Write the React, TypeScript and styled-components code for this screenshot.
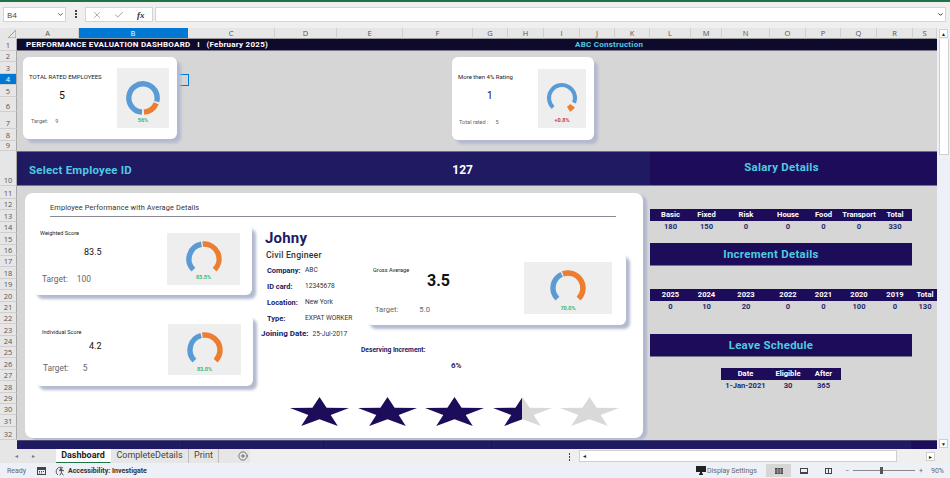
import React from "react";
import styled, { createGlobalStyle } from "styled-components";
import { Check, CirclePlus, ChevronDown, X } from "lucide-react";

const NAVY = "#1d0c5a";
const BAND = "#201a63";
const CYAN = "#4ecbe0";
const BLUE = "#5b9bd5";
const ORANGE = "#ed7d31";
const SHADOW = "#b3bad0";
const FONT = `"Roboto", "Liberation Sans", sans-serif`;

const GlobalStyle = createGlobalStyle`
  html, body {
    margin: 0;
    padding: 0;
    width: 950px;
    height: 478px;
    overflow: hidden;
    background: #efefef;
    font-family: ${FONT};
  }
  * { box-sizing: border-box; }
`;

const Window = styled.div`
  width: 950px;
  height: 478px;
  display: flex;
  flex-direction: column;
  border-top: 2px solid #217346;
  overflow: hidden;
`;

/* formula bar */
const FormulaBar = styled.div`
  height: 26px;
  flex: none;
  background: #efefef;
  display: flex;
  align-items: flex-start;
  padding: 5px 4px 0 3px;
`;

const NameBox = styled.div`
  width: 63px;
  height: 15px;
  background: #fff;
  border: 1px solid #d4d4d4;
  display: flex;
  align-items: center;
  justify-content: space-between;
  padding: 0 1px 0 3px;
  font: 8px "Open Sans", sans-serif;
  color: #444;
`;

const Kebab = styled.div`
  width: 1.5px;
  height: 1.5px;
  margin: 6px 8px 0 9px;
  background: #444;
  box-shadow: 0 -3px 0 #444, 0 3px 0 #444;
`;

const FormulaTools = styled.div`
  width: 68px;
  height: 15px;
  background: #fff;
  border: 1px solid #d4d4d4;
  display: flex;
  align-items: center;
  justify-content: space-between;
  padding: 0 7px 0 6px;
  color: #666;
`;

const Fx = styled.span`
  font: italic 700 9px "Liberation Serif", serif;
  color: #333;
`;

const FormulaInput = styled.div`
  flex: 1;
  height: 15px;
  margin-left: 2px;
  background: #fff;
  border: 1px solid #d4d4d4;
  display: flex;
  align-items: center;
  justify-content: flex-end;
  padding-right: 1px;
  color: #222;
`;

/* column headers */
const ColumnHeaders = styled.div`
  height: 11px;
  flex: none;
  display: flex;
  background: #efefef;
`;

const Corner = styled.div`
  width: 17px;
  background: #e6e6e6;
  display: flex;
  align-items: flex-end;
  justify-content: flex-end;
  padding: 0 1px 1px 0;
`;

const ColumnCell = styled.div<{ $w: number; $active?: boolean }>`
  width: ${(p) => p.$w}px;
  background: ${(p) => (p.$active ? "#0078d4" : "#e6e6e6")};
  color: ${(p) => (p.$active ? "#fff" : "#555")};
  border-right: 1px solid ${(p) => (p.$active ? "#0078d4" : "#cfcfcf")};
  border-bottom: 1px solid #9a9a9a;
  font: 7.5px/10px "Open Sans", sans-serif;
  text-align: center;
`;

const ScrollCap = styled.div`
  flex: 1;
  background: #eef0f7;
  padding: 1px 1px 0 2px;
`;

/* sheet */
const SheetRow = styled.div`
  height: 410px;
  flex: none;
  display: flex;
`;

const RowHeaders = styled.div`
  width: 17px;
  flex: none;
  background: #e6e6e6;
  display: flex;
  flex-direction: column;
`;

const RowCell = styled.div<{ $h: number; $active?: boolean }>`
  height: ${(p) => p.$h}px;
  flex: none;
  background: ${(p) => (p.$active ? "#0078d4" : "#e6e6e6")};
  color: ${(p) => (p.$active ? "#fff" : "#555")};
  border-bottom: 1px solid #cfcfcf;
  border-right: 1px solid #a8a8a8;
  display: flex;
  align-items: flex-end;
  justify-content: center;
  font: 7.5px/10px "Open Sans", sans-serif;
`;

const Sheet = styled.div`
  width: 920px;
  flex: none;
  display: flex;
  flex-direction: column;
  background: #d6d6d6;
`;

const TitleBar = styled.div`
  height: 12px;
  flex: none;
  background: #0d0a2c;
  border-bottom: 1px solid #77758c;
  display: flex;
  align-items: center;
  font-size: 8px;
  font-weight: 700;
  letter-spacing: 0.25px;
  white-space: pre;
  padding-left: 9px;
`;

const TitleText = styled.span`
  width: 549px;
  color: #fff;
`;

const TitleCompany = styled.span`
  color: ${CYAN};
`;

const TopCanvas = styled.div`
  height: 100px;
  flex: none;
  position: relative;
  display: flex;
  padding: 6px 0 0 6px;
`;

const SelectedCell = styled.div`
  position: absolute;
  left: 62px;
  top: 23px;
  width: 110px;
  height: 12px;
  border: 1.5px solid #0078d4;
`;

const SelectBand = styled.div`
  height: 35px;
  flex: none;
  display: grid;
  grid-template-columns: 633px 287px;
  border-top: 1px solid #6d6a8a;
  border-bottom: 1px solid #77758c;
`;

const SelectLeft = styled.div`
  background: ${BAND};
  position: relative;
  display: flex;
  align-items: center;
  justify-content: space-between;
  padding: 3px 177px 0 12px;
`;

const SelectLabel = styled.span`
  color: ${CYAN};
  font-size: 11.4px;
  font-weight: 700;
  letter-spacing: 0.25px;
`;

const SelectValue = styled.span`
  color: #fff;
  font-size: 12px;
  font-weight: 700;
`;

const SelectRight = styled.div`
  background: ${NAVY};
  color: ${CYAN};
  font-size: 11.4px;
  font-weight: 700;
  letter-spacing: 0.3px;
  display: flex;
  justify-content: center;
  padding: 8px 24px 0 0;
`;

const Main = styled.div`
  height: 254px;
  flex: none;
  display: grid;
  grid-template-columns: 633px 287px;
`;

const BottomBand = styled.div`
  height: 9px;
  flex: none;
  display: flex;
  background: ${BAND};
  border-top: 1px solid #4d4a78;
`;

const BottomSegment = styled.div<{ $w: number; $dark?: boolean }>`
  width: ${(p) => p.$w}px;
  background: ${(p) => (p.$dark ? NAVY : BAND)};
  border-right: 1px solid ${(p) => (p.$dark ? NAVY : "#191450")};
`;

/* floating cards */
const Card = styled.div<{ $w: number; $h: number; $left?: number; $top?: number }>`
  width: ${(p) => p.$w}px;
  height: ${(p) => p.$h}px;
  margin-left: ${(p) => p.$left ?? 0}px;
  margin-top: ${(p) => p.$top ?? 0}px;
  flex: none;
  position: relative;
  display: flex;
  justify-content: space-between;
  background: #fff;
  border-radius: 6px;
  box-shadow: 4px 4px 3px ${SHADOW};
`;

const CardText = styled.div<{ $x: number; $y: number }>`
  display: flex;
  flex-direction: column;
  padding: ${(p) => p.$y}px 0 0 ${(p) => p.$x}px;
`;

const CardTitle = styled.div<{ $size: number }>`
  font-size: ${(p) => p.$size}px;
  line-height: 8px;
  font-weight: 400;
  color: #222;
  white-space: nowrap;
`;

const CardValue = styled.div<{ $x: number; $y: number; $size: number; $bold?: boolean }>`
  margin: ${(p) => p.$y}px 0 0 ${(p) => p.$x}px;
  font-size: ${(p) => p.$size}px;
  line-height: 12px;
  font-weight: ${(p) => (p.$bold ? 700 : 400)};
  color: #111;
`;

const CardFoot = styled.div<{ $x: number; $y: number; $size: number; $gap: number }>`
  margin: ${(p) => p.$y}px 0 0 ${(p) => p.$x}px;
  display: flex;
  gap: ${(p) => p.$gap}px;
  font-size: ${(p) => p.$size}px;
  line-height: 8px;
  color: #666;
  white-space: nowrap;
`;

const Thumb = styled.div<{ $w: number; $h: number; $x: number; $y: number; $pad: number }>`
  width: ${(p) => p.$w}px;
  height: ${(p) => p.$h}px;
  margin: ${(p) => p.$y}px ${(p) => p.$x}px 0 0;
  padding-top: ${(p) => p.$pad}px;
  flex: none;
  background: #eeeeee;
  display: flex;
  flex-direction: column;
  align-items: center;
`;

const Percent = styled.div<{ $gap: number; $red?: boolean }>`
  margin-top: ${(p) => p.$gap}px;
  font-size: 5.5px;
  line-height: 6px;
  font-weight: 700;
  color: ${(p) => (p.$red ? "#c73b4b" : "#37b878")};
`;

/* big card */
const BigCard = styled.div`
  width: 618px;
  height: 245px;
  margin: 7px 0 0 8px;
  background: #fff;
  border-radius: 8px;
  box-shadow: 4px 2px 2px ${SHADOW};
  display: flex;
  flex-direction: column;
`;

const BigHeading = styled.div`
  margin: 11px 27px 0 25px;
  height: 13px;
  border-bottom: 1px solid #8a8a94;
  font-size: 7.4px;
  line-height: 8px;
  font-weight: 400;
  color: #333;
  letter-spacing: 0.1px;
`;

const BigBody = styled.div`
  display: grid;
  grid-template-columns: 228px 108px 1fr;
  margin-top: 8px;
  height: 161px;
`;

const ScoreColumn = styled.div`
  padding-left: 8px;
  display: flex;
  flex-direction: column;
  gap: 20px;
`;

const Profile = styled.div`
  display: flex;
  flex-direction: column;
  padding: 5px 0 0 8px;
`;

const Name = styled.div`
  font-size: 15px;
  line-height: 17px;
  font-weight: 700;
  color: ${BAND};
  letter-spacing: 0.2px;
  margin-left: 4px;
`;

const Role = styled.div`
  font-size: 8.7px;
  line-height: 10px;
  font-weight: 500;
  color: #333;
  letter-spacing: 0.2px;
  margin: 3px 0 2px 5px;
`;

const InfoRow = styled.div`
  display: grid;
  grid-template-columns: 38px 1fr;
  align-items: center;
  height: 16px;
  margin-left: 6px;
`;

const InfoLabel = styled.span`
  font-size: 7.4px;
  font-weight: 700;
  color: ${BAND};
  white-space: nowrap;
`;

const InfoValue = styled.span`
  font-size: 6.6px;
  color: #333;
  white-space: nowrap;
`;

const JoinRow = styled.div`
  display: flex;
  align-items: center;
  gap: 4px;
  margin-top: 3px;
  white-space: nowrap;
`;

const JoinLabel = styled.span`
  font-size: 8px;
  font-weight: 700;
  color: ${BAND};
`;

const RightColumn = styled.div`
  display: flex;
  flex-direction: column;
  align-items: flex-start;
  padding-top: 28px;
`;

const IncrementLabel = styled.div`
  margin-top: 21px;
  font-size: 6.7px;
  line-height: 8px;
  font-weight: 700;
  color: ${BAND};
  white-space: nowrap;
`;

const IncrementValue = styled.div`
  margin: 7px 0 0 90px;
  font-size: 8px;
  line-height: 10px;
  font-weight: 700;
  color: #2e2a6b;
`;

const StarRow = styled.div`
  display: flex;
  gap: 8.5px;
  margin: 11px 0 0 265px;
`;

/* right side tables */
const Details = styled.div`
  display: flex;
  flex-direction: column;
  padding-top: 23px;
`;

const TableGrid = styled.div<{ $span?: number }>`
  display: grid;
  width: ${(p) => p.$span ?? 262}px;
  grid-template-columns: 41px 31px 48px 36px 35px 36px 36px 24px;
  overflow: hidden;
`;

const HeadCell = styled.div`
  height: 12px;
  background: ${NAVY};
  color: #fff;
  font-size: 7.6px;
  line-height: 12px;
  font-weight: 700;
  text-align: center;
  white-space: nowrap;
`;

const ValueCell = styled.div`
  height: 12px;
  color: #1f2a6b;
  font-size: 7.6px;
  line-height: 12px;
  font-weight: 700;
  text-align: center;
  white-space: nowrap;
`;

const DetailBand = styled.div<{ $top: number; $bottom: number }>`
  width: 262px;
  height: 23px;
  margin: ${(p) => p.$top}px 0 ${(p) => p.$bottom}px;
  background: ${NAVY};
  border-bottom: 1px solid #77758c;
  color: ${CYAN};
  font-size: 11.4px;
  line-height: 22px;
  font-weight: 700;
  letter-spacing: 0.3px;
  text-align: center;
  padding-right: 20px;
`;

const LeaveTable = styled.div`
  width: 120px;
  margin-left: 71px;
  display: grid;
  grid-template-columns: 49px 36px 35px;
`;

/* scrollbar */
const VScroll = styled.div`
  flex: 1;
  background: #eef0f7;
  display: flex;
  flex-direction: column;
  padding: 0 1px 1px 2px;
`;

const VTrack = styled.div`
  height: 116px;
  background: #fff;
  border: 1px solid #cfcfcf;
  border-top: none;
`;

const ScrollButton = styled.div`
  width: 9px;
  height: 9px;
  flex: none;
  background: #fff;
  border: 1px solid #cfcfcf;
  font-size: 5px;
  line-height: 8px;
  text-align: center;
  color: #222;
`;

const VSpacer = styled.div`
  flex: 1;
`;

/* tabs */
const TabBar = styled.div`
  height: 14px;
  flex: none;
  background: #efefef;
  display: flex;
  align-items: stretch;
`;

const TabNav = styled.div`
  width: 56px;
  background: #e6e6e6;
  display: flex;
  align-items: center;
  gap: 12px;
  padding-left: 14px;
  font-size: 5px;
  color: #777;
`;

const Tab = styled.div<{ $w: number; $active?: boolean }>`
  width: ${(p) => p.$w}px;
  flex: none;
  background: ${(p) => (p.$active ? "#fff" : "#e6e6e6")};
  border-bottom: ${(p) => (p.$active ? "1px solid #217346" : "none")};
  border-right: 1px solid ${(p) => (p.$active ? "transparent" : "#bdbdbd")};
  color: ${(p) => (p.$active ? "#1f1f1f" : "#444")};
  font-size: 9px;
  font-weight: ${(p) => (p.$active ? 700 : 400)};
  line-height: 13px;
  text-align: center;
  white-space: nowrap;
`;

const AddTab = styled.div`
  width: 31px;
  background: #e6e6e6;
  display: flex;
  align-items: center;
  justify-content: flex-end;
  padding-right: 2px;
  color: #333;
`;

const TabSpacer = styled.div`
  width: 329px;
  display: flex;
  align-items: center;
  justify-content: flex-end;
  padding: 0 1px 4px 0;
`;

const HTrack = styled.div`
  width: 318px;
  margin: 1px 0;
  background: #fff;
  border: 1px solid #cfcfcf;
  font-size: 5px;
  line-height: 10px;
  padding-left: 2px;
  color: #222;
`;

const HTail = styled.div`
  flex: 1;
  display: flex;
  justify-content: flex-end;
  align-items: center;
  padding-right: 15px;
`;

/* status bar */
const StatusBar = styled.div`
  flex: 1;
  background: #eef0f7;
  display: flex;
  align-items: center;
  padding-left: 7px;
  font: 7px "Roboto", sans-serif;
  color: #666;
`;

const Ready = styled.span`
  width: 30px;
`;

const Accessibility = styled.span`
  display: flex;
  align-items: center;
  gap: 2px;
  width: 641px;
  margin-left: 9px;
  font-weight: 700;
  color: #333;
`;

const DisplaySettings = styled.span`
  display: flex;
  align-items: center;
  gap: 1px;
  width: 70px;
`;

const ViewButton = styled.span<{ $active?: boolean }>`
  width: 25px;
  height: 13px;
  display: flex;
  align-items: center;
  justify-content: center;
  background: ${(p) => (p.$active ? "#d6d6d6" : "transparent")};
`;

const ZoomMinus = styled.span`
  margin-left: 4px;
`;

const ZoomTrack = styled.span`
  width: 62px;
  height: 1px;
  background: #888;
  margin: 0 4px;
  position: relative;
`;

const ZoomThumb = styled.span`
  position: absolute;
  left: 27px;
  top: -3px;
  width: 3px;
  height: 7px;
  background: #555;
`;

const ZoomLevel = styled.span`
  margin-left: 8px;
`;

const polar = (cx: number, cy: number, r: number, deg: number) => {
  const rad = ((deg - 90) * Math.PI) / 180;
  return [cx + r * Math.cos(rad), cy + r * Math.sin(rad)];
};

const arcPath = (r: number, start: number, end: number) => {
  const [x1, y1] = polar(20, 20, r, start);
  const [x2, y2] = polar(20, 20, r, end);
  const large = end - start > 180 ? 1 : 0;
  return `M${x1} ${y1}A${r} ${r} 0 ${large} 1 ${x2} ${y2}`;
};

interface GaugeProps {
  r: number;
  stroke: number;
  orangeStroke?: number;
  blue: [number, number];
  orange: [number, number];
}

const Gauge = ({ r, stroke, orangeStroke, blue, orange }: GaugeProps) => (
  <svg width="40" height="40" viewBox="0 0 40 40" style={{ flex: "none" }}>
    <path d={arcPath(r, blue[0], blue[1])} fill="none" stroke={BLUE} strokeWidth={stroke} />
    <path d={arcPath(r, orange[0], orange[1])} fill="none" stroke={ORANGE} strokeWidth={orangeStroke ?? stroke} />
  </svg>
);

const Star = ({ fill }: { fill: number }) => {
  const id = `star-${Math.round(fill * 100)}`;
  return (
    <svg width="59" height="29" viewBox="0 0 100 100" preserveAspectRatio="none">
      <defs>
        <linearGradient id={id}>
          <stop offset={fill} stopColor={NAVY} />
          <stop offset={fill} stopColor="#d9d9d9" />
        </linearGradient>
      </defs>
      <polygon
        points="50,0 62,37 100,38 69,62 81,100 50,77 19,100 31,62 0,38 38,37"
        fill={`url(#${id})`}
      />
    </svg>
  );
};

const columns = [
  ["A", 62], ["B", 109], ["C", 87], ["D", 62], ["E", 66], ["F", 70], ["G", 35], ["H", 36], ["I", 36], ["J", 35],
  ["K", 35], ["L", 41], ["M", 31], ["N", 48], ["O", 36], ["P", 35], ["Q", 36], ["R", 36], ["S", 24],
] as [string, number][];

const rowHeights = [
  12, 11, 12, 11, 12, 15, 17, 12, 10, 35, 13, 11.4, 11.4, 11.4, 11.4, 11.4, 11.4, 11.4, 11.4, 11.4, 11.4, 11.4,
  11.4, 11.4, 11.4, 11.4, 11.4, 11.4, 11.4, 11.4, 11.4, 13,
];

const salary = [
  ["Basic", "180"], ["Fixed", "150"], ["Risk", "0"], ["House", "0"], ["Food", "0"], ["Transport", "0"], ["Total", "330"],
];

const increments = [
  ["2025", "0"], ["2024", "10"], ["2023", "20"], ["2022", "0"], ["2021", "0"], ["2020", "100"], ["2019", "0"], ["Total", "130"],
];

const leave = [["Date", "1-Jan-2021"], ["Eligible", "30"], ["After", "365"]];

const info = [
  ["Company:", "ABC"],
  ["ID card:", "12345678"],
  ["Location:", "New York"],
  ["Type:", "EXPAT WORKER"],
];

const App = () => {
  return (
    <Window>
      <GlobalStyle />
      <FormulaBar>
        <NameBox>
          B4
          <ChevronDown size={7} strokeWidth={3} />
        </NameBox>
        <Kebab />
        <FormulaTools>
          <X size={10} strokeWidth={1.3} />
          <Check size={10} strokeWidth={1.5} />
          <Fx>fx</Fx>
        </FormulaTools>
        <FormulaInput>
          <ChevronDown size={7} strokeWidth={3} />
        </FormulaInput>
      </FormulaBar>

      <ColumnHeaders>
        <Corner>
          <svg width="8" height="8" viewBox="0 0 8 8">
            <path d="M8 0V8H0Z" fill="none" stroke="#999" />
          </svg>
        </Corner>
        {columns.map(([label, w]) => (
          <ColumnCell key={label} $w={w} $active={label === "B"}>
            {label}
          </ColumnCell>
        ))}
        <ScrollCap>
          <ScrollButton>▲</ScrollButton>
        </ScrollCap>
      </ColumnHeaders>

      <SheetRow>
        <RowHeaders>
          {rowHeights.map((h, i) => (
            <RowCell key={i} $h={h} $active={i === 3}>
              {i + 1}
            </RowCell>
          ))}
        </RowHeaders>

        <Sheet>
          <TitleBar>
            <TitleText>{"PERFORMANCE EVALUATION DASHBOARD   I   (February 2025)"}</TitleText>
            <TitleCompany>ABC Construction</TitleCompany>
          </TitleBar>

          <TopCanvas>
            <SelectedCell />
            <Card $w={154} $h={82}>
              <CardText $x={6} $y={16}>
                <CardTitle $size={6}>TOTAL RATED EMPLOYEES</CardTitle>
                <CardValue $x={30} $y={9} $size={10.5}>5</CardValue>
                <CardFoot $x={2} $y={15} $size={5.6} $gap={7}>
                  <span>Target:</span>
                  <span>9</span>
                </CardFoot>
              </CardText>
              <Thumb $w={52} $h={60} $x={8} $y={11} $pad={10}>
                <Gauge r={14.2} stroke={5.4} blue={[184, 465]} orange={[112, 176]} />
                <Percent $gap={-1}>56%</Percent>
              </Thumb>
            </Card>
            <Card $w={142} $h={83} $left={275}>
              <CardText $x={6} $y={16}>
                <CardTitle $size={6}>More then 4% Rating</CardTitle>
                <CardValue $x={29} $y={9} $size={10}>1</CardValue>
                <CardFoot $x={1} $y={16} $size={5.6} $gap={7}>
                  <span>Total rated :</span>
                  <span>5</span>
                </CardFoot>
              </CardText>
              <Thumb $w={48} $h={59} $x={8} $y={12} $pad={9}>
                <Gauge r={13} stroke={4} orangeStroke={6} blue={[223, 472]} orange={[126, 150]} />
                <Percent $gap={-1} $red>+0.8%</Percent>
              </Thumb>
            </Card>
          </TopCanvas>

          <SelectBand>
            <SelectLeft>
              <SelectLabel>Select Employee ID</SelectLabel>
              <SelectValue>127</SelectValue>
            </SelectLeft>
            <SelectRight>Salary Details</SelectRight>
          </SelectBand>

          <Main>
            <BigCard>
              <BigHeading>Employee Performance with Average Details</BigHeading>
              <BigBody>
                <ScoreColumn>
                  <Card $w={219} $h={70}>
                    <CardText $x={7} $y={4}>
                      <CardTitle $size={5.6}>Weighted Score</CardTitle>
                      <CardValue $x={44} $y={9} $size={9}>83.5</CardValue>
                      <CardFoot $x={2} $y={17} $size={8.4} $gap={9}>
                        <span>Target:</span>
                        <span>100</span>
                      </CardFoot>
                    </CardText>
                    <Thumb $w={73} $h={52} $x={12} $y={8} $pad={6}>
                      <Gauge r={15} stroke={5.4} blue={[225, 350]} orange={[355, 495]} />
                      <Percent $gap={-5}>83.5%</Percent>
                    </Thumb>
                  </Card>
                  <Card $w={218} $h={71} $left={2}>
                    <CardText $x={7} $y={13}>
                      <CardTitle $size={5.6}>Individual Score</CardTitle>
                      <CardValue $x={47} $y={4} $size={9}>4.2</CardValue>
                      <CardFoot $x={1} $y={12} $size={8.4} $gap={14}>
                        <span>Target:</span>
                        <span>5</span>
                      </CardFoot>
                    </CardText>
                    <Thumb $w={73} $h={51} $x={12} $y={9} $pad={6}>
                      <Gauge r={15} stroke={5.4} blue={[225, 345]} orange={[350, 495]} />
                      <Percent $gap={-4}>83.0%</Percent>
                    </Thumb>
                  </Card>
                </ScoreColumn>

                <Profile>
                  <Name>Johny</Name>
                  <Role>Civil Engineer</Role>
                  {info.map(([label, value]) => (
                    <InfoRow key={label}>
                      <InfoLabel>{label}</InfoLabel>
                      <InfoValue>{value}</InfoValue>
                    </InfoRow>
                  ))}
                  <JoinRow>
                    <JoinLabel>Joining Date:</JoinLabel>
                    <InfoValue>25-Jul-2017</InfoValue>
                  </JoinRow>
                </Profile>

                <RightColumn>
                  <Card $w={260} $h={72} $left={5}>
                    <CardText $x={7} $y={13}>
                      <CardTitle $size={5.6}>Gross Average</CardTitle>
                      <CardValue $x={54} $y={1} $size={16} $bold>3.5</CardValue>
                      <CardFoot $x={2} $y={19} $size={7.6} $gap={21}>
                        <span>Target:</span>
                        <span>5.0</span>
                      </CardFoot>
                    </CardText>
                    <Thumb $w={88} $h={52} $x={14} $y={9} $pad={6}>
                      <Gauge r={15} stroke={5.4} blue={[225, 335]} orange={[340, 495]} />
                      <Percent $gap={-3}>70.0%</Percent>
                    </Thumb>
                  </Card>
                  <IncrementLabel>Deserving Increment:</IncrementLabel>
                  <IncrementValue>6%</IncrementValue>
                </RightColumn>
              </BigBody>
              <StarRow>
                <Star fill={1} />
                <Star fill={1} />
                <Star fill={1} />
                <Star fill={0.5} />
                <Star fill={0} />
              </StarRow>
            </BigCard>

            <Details>
              <TableGrid>
                {salary.map(([label]) => (
                  <HeadCell key={label}>{label}</HeadCell>
                ))}
                <HeadCell />
                {salary.map(([label, value]) => (
                  <ValueCell key={label}>{value}</ValueCell>
                ))}
              </TableGrid>
              <DetailBand $top={10} $bottom={23}>Increment Details</DetailBand>
              <TableGrid $span={287}>
                {increments.map(([label]) => (
                  <HeadCell key={label}>{label}</HeadCell>
                ))}
                {increments.map(([label, value]) => (
                  <ValueCell key={label}>{value}</ValueCell>
                ))}
              </TableGrid>
              <DetailBand $top={21} $bottom={11}>Leave Schedule</DetailBand>
              <LeaveTable>
                {leave.map(([label]) => (
                  <HeadCell key={label}>{label}</HeadCell>
                ))}
                {leave.map(([label, value]) => (
                  <ValueCell key={label}>{value}</ValueCell>
                ))}
              </LeaveTable>
            </Details>
          </Main>

          <BottomBand>
            <BottomSegment $w={166} />
            <BottomSegment $w={141} />
            <BottomSegment $w={168} />
            <BottomSegment $w={420} />
            <BottomSegment $w={25} $dark />
          </BottomBand>
        </Sheet>

        <VScroll>
          <VTrack />
          <VSpacer />
          <ScrollButton>▼</ScrollButton>
        </VScroll>
      </SheetRow>

      <TabBar>
        <TabNav>
          <span>◄</span>
          <span>►</span>
        </TabNav>
        <Tab $w={55} $active>Dashboard</Tab>
        <Tab $w={78}>CompleteDetails</Tab>
        <Tab $w={30}>Print</Tab>
        <AddTab>
          <CirclePlus size={10} strokeWidth={1.5} />
        </AddTab>
        <TabSpacer>
          <Kebab />
        </TabSpacer>
        <HTrack>◄</HTrack>
        <HTail>
          <ScrollButton>►</ScrollButton>
        </HTail>
      </TabBar>

      <StatusBar>
        <Ready>Ready</Ready>
        <svg width="9" height="8" viewBox="0 0 9 8">
          <path d="M0 0H9V8H0ZM1 3V7H8V3Z" fill="#444" fillRule="evenodd" />
          <path d="M2 4H3V5H2ZM4 4H5V5H4ZM6 4H7V5H6ZM2 5.6H3V6.6H2ZM4 5.6H5V6.6H4Z" fill="#444" />
        </svg>
        <Accessibility>
          <svg width="11" height="10" viewBox="0 0 11 10" fill="none" stroke="#444" strokeWidth="0.9">
            <path d="M3 9A4 4 0 1 1 8 2" />
            <circle cx="6" cy="3.4" r="0.8" fill="#444" />
            <path d="M4 4.6H9M6.4 4.6V6.6L4.8 9.4M6.4 6.6L8.4 9.4" />
          </svg>
          Accessibility: Investigate
        </Accessibility>
        <DisplaySettings>
          <svg width="10" height="9" viewBox="0 0 10 9">
            <path d="M0 0H10V6H6V7.5H7V9H3V7.5H4V6H0Z" fill="#222" />
          </svg>
          Display Settings
        </DisplaySettings>
        <ViewButton $active>
          <svg width="8" height="6" viewBox="0 0 8 6">
            <path d="M0 0H8V6H0Z" fill="#444" />
            <path d="M0 2H8M0 4H8M2.7 0V6M5.3 0V6" stroke="#d6d6d6" strokeWidth="0.5" />
          </svg>
        </ViewButton>
        <ViewButton>
          <svg width="8" height="6" viewBox="0 0 8 6">
            <path d="M0 0H8V6H0ZM1 1V4H7V1Z" fill="#444" fillRule="evenodd" />
          </svg>
        </ViewButton>
        <ViewButton>
          <svg width="7" height="6" viewBox="0 0 7 6">
            <path d="M0 0H7V6H0ZM1 1V5H3V1ZM4 1V5H6V1Z" fill="#444" fillRule="evenodd" />
          </svg>
        </ViewButton>
        <ZoomMinus>−</ZoomMinus>
        <ZoomTrack>
          <ZoomThumb />
        </ZoomTrack>
        <span>+</span>
        <ZoomLevel>90%</ZoomLevel>
      </StatusBar>
    </Window>
  );
};

export default App;
